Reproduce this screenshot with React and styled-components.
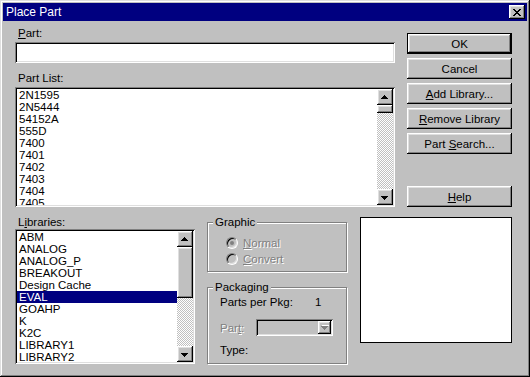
import React from 'react';
import styled, { createGlobalStyle, css } from 'styled-components';

const GlobalStyle = createGlobalStyle`
  html, body {
    margin: 0;
    padding: 0;
    background: #c0c0c0;
  }
  body {
    font-family: "Liberation Sans", Arial, sans-serif;
    font-size: 11.5px;
    color: #000;
  }
  * {
    box-sizing: border-box;
  }
`;

const raised = css`
  box-shadow: inset -1px -1px #000, inset 1px 1px #fff, inset -2px -2px #808080, inset 2px 2px #dfdfdf;
`;

const sunken = css`
  box-shadow: inset 1px 1px #808080, inset -1px -1px #fff, inset 2px 2px #000, inset -2px -2px #dfdfdf;
`;

const disabledText = css`
  color: #808080;
  text-shadow: 1px 1px 0 #fff;
`;

const Window = styled.div`
  width: 530px;
  height: 377px;
  padding: 3px;
  background: #c0c0c0;
  display: flex;
  flex-direction: column;
  box-shadow: inset -1px -1px #000, inset 1px 1px #dfdfdf, inset -2px -2px #808080, inset 2px 2px #fff;
`;

const TitleBar = styled.div`
  height: 18px;
  flex-shrink: 0;
  background: #000080;
  color: #fff;
  display: flex;
  align-items: center;
  justify-content: space-between;
  padding: 0 2px 0 3px;
  font-size: 12px;
`;

const CloseButton = styled.button`
  width: 16px;
  height: 14px;
  border: none;
  padding: 0;
  background: #c0c0c0;
  display: flex;
  align-items: center;
  justify-content: center;
  ${raised}
`;

const Body = styled.div`
  flex: 1;
  display: flex;
  flex-direction: column;
  padding: 6px 14px 0 12px;
`;

const TopSection = styled.div`
  display: grid;
  grid-template-columns: 380px 105px;
  column-gap: 12px;
`;

const Column = styled.div`
  display: flex;
  flex-direction: column;
`;

const Label = styled.label`
  display: block;
  height: 13px;
  line-height: 13px;
  padding-left: 3px;
  white-space: nowrap;
  margin-top: ${p => p.$top || 0}px;
  margin-bottom: ${p => p.$bottom || 0}px;
`;

const TextInput = styled.input`
  height: 21px;
  width: 100%;
  border: none;
  background: #fff;
  padding: 3px 4px;
  font: inherit;
  outline: none;
  ${sunken}
`;

const ButtonColumn = styled.div`
  display: flex;
  flex-direction: column;
  gap: 4px;
  padding-top: 6px;
`;

const Button = styled.button`
  height: 21px;
  width: 100%;
  border: none;
  padding: 0;
  background: #c0c0c0;
  font: inherit;
  color: #000;
  margin-top: ${p => p.$top || 0}px;
  ${p =>
    p.$default
      ? css`
          box-shadow: inset 0 0 0 1px #000, inset -2px -2px #000, inset 2px 2px #fff,
            inset -3px -3px #808080, inset 3px 3px #dfdfdf;
        `
      : raised}
`;

const ListBox = styled.div`
  height: ${p => p.$height}px;
  display: flex;
  padding: 2px;
  background: #fff;
  ${sunken}
`;

const ListItems = styled.div`
  flex: 1;
  overflow: hidden;
`;

const ListItem = styled.div`
  height: 12px;
  line-height: 12px;
  padding-left: 2px;
  white-space: nowrap;
  background: ${p => (p.$selected ? '#000080' : 'transparent')};
  color: ${p => (p.$selected ? '#fff' : '#000')};
`;

const ScrollBar = styled.div`
  width: 16px;
  flex-shrink: 0;
  display: flex;
  flex-direction: column;
`;

const ScrollButton = styled.div`
  height: 16px;
  flex-shrink: 0;
  background: #c0c0c0;
  display: flex;
  align-items: center;
  justify-content: center;
  ${raised}
`;

const Thumb = styled.div`
  height: ${p => p.$height}px;
  flex-shrink: 0;
  background: #c0c0c0;
  ${raised}
`;

const Track = styled.div`
  flex: 1;
  background: repeating-conic-gradient(#c0c0c0 0 25%, #fff 0 50%) 0 0 / 2px 2px;
`;

const BottomSection = styled.div`
  display: flex;
  align-items: flex-start;
  margin-top: 9px;
`;

const LibraryColumn = styled.div`
  width: 180px;
  display: flex;
  flex-direction: column;
`;

const GroupColumn = styled.div`
  width: 140px;
  margin-left: 12px;
  display: flex;
  flex-direction: column;
`;

const Group = styled.fieldset`
  margin: ${p => p.$top || 0}px 0 0 0;
  padding: ${p => p.$padTop}px 0 ${p => p.$padBottom}px 5px;
  min-width: 0;
  border: 1px solid #808080;
  box-shadow: 1px 1px 0 #fff, inset 1px 1px 0 #fff;
`;

const Legend = styled.legend`
  padding: 0 2px;
  line-height: 13px;
  background: #c0c0c0;
`;

const RadioRow = styled.div`
  height: 16px;
  margin-left: 13px;
  display: flex;
  align-items: center;
  gap: 5px;
  ${disabledText}
`;

const RadioCircle = styled.span`
  position: relative;
  width: 12px;
  height: 12px;
  border-radius: 50%;
  border: 1px solid;
  border-color: #808080 #fff #fff #808080;
  background: #c0c0c0;
  box-shadow: inset 1px 1px #000, inset -1px -1px #dfdfdf;
  flex-shrink: 0;

  &::after {
    content: "";
    display: ${p => (p.$checked ? 'block' : 'none')};
    position: absolute;
    left: 3px;
    top: 3px;
    width: 4px;
    height: 4px;
    border-radius: 50%;
    background: #808080;
  }
`;

const InfoRow = styled.div`
  height: ${p => p.$height}px;
  margin: ${p => p.$top || 0}px 0 0 7px;
  display: flex;
  align-items: center;
  white-space: nowrap;
`;

const InfoLabel = styled.span`
  width: ${p => p.$width}px;
  flex-shrink: 0;
  ${p => p.$disabled && disabledText}
`;

const Combo = styled.div`
  width: 77px;
  height: 17px;
  padding: 2px;
  background: #c0c0c0;
  display: flex;
  justify-content: flex-end;
  ${sunken}
`;

const ComboButton = styled.div`
  width: 13px;
  height: 13px;
  background: #c0c0c0;
  display: flex;
  align-items: center;
  justify-content: center;
  ${raised}
`;

const Preview = styled.div`
  width: 152px;
  height: 126px;
  margin: 1px 0 0 13px;
  background: #fff;
  border: 1px solid #000;
`;

const arrowPath = 'M3 0h1v1h1v1h1v1h1v1H0V3h1V2h1V1h1z';

const Arrow = ({ down, disabled }) => (
  <svg width="8" height="5" viewBox="0 0 8 5" shapeRendering="crispEdges"
    style={down ? { transform: 'scaleY(-1)' } : undefined}>
    {disabled && <path d={arrowPath} fill="#fff" transform="translate(1 1)" />}
    <path d={arrowPath} fill={disabled ? '#808080' : '#000'} />
  </svg>
);

const CloseGlyph = () => (
  <svg width="8" height="7" viewBox="0 0 8 7" shapeRendering="crispEdges">
    <path
      fill="#000"
      d="M0 0h2v1H0zM6 0h2v1H6zM1 1h2v1H1zM5 1h2v1H5zM2 2h4v1H2zM3 3h2v1H3zM2 4h4v1H2zM1 5h2v1H1zM5 5h2v1H5zM0 6h2v1H0zM6 6h2v1H6z"
    />
  </svg>
);

const ScrollTrack = ({ thumb }) => (
  <ScrollBar>
    <ScrollButton><Arrow /></ScrollButton>
    <Thumb $height={thumb} />
    <Track />
    <ScrollButton><Arrow down /></ScrollButton>
  </ScrollBar>
);

const parts = ['2N1595', '2N5444', '54152A', '555D', '7400', '7401', '7402', '7403', '7404', '7405', '7406'];
const libraries = ['ABM', 'ANALOG', 'ANALOG_P', 'BREAKOUT', 'Design Cache', 'EVAL', 'GOAHP', 'K', 'K2C', 'LIBRARY1', 'LIBRARY2'];

export default function App() {
  return (
    <>
      <GlobalStyle />
      <Window>
        <TitleBar>
          <span>Place Part</span>
          <CloseButton aria-label="Close"><CloseGlyph /></CloseButton>
        </TitleBar>
        <Body>
          <TopSection>
            <Column>
              <Label $bottom={2}><u>P</u>art:</Label>
              <TextInput defaultValue="" />
              <Label $top={9} $bottom={2}>Part List:</Label>
              <ListBox $height={120}>
                <ListItems>
                  {parts.map(p => <ListItem key={p}>{p}</ListItem>)}
                </ListItems>
                <ScrollTrack thumb={8} />
              </ListBox>
            </Column>
            <ButtonColumn>
              <Button $default>OK</Button>
              <Button>Cancel</Button>
              <Button><u>A</u>dd Library...</Button>
              <Button><u>R</u>emove Library</Button>
              <Button>Part <u>S</u>earch...</Button>
              <Button $top={28}><u>H</u>elp</Button>
            </ButtonColumn>
          </TopSection>
          <BottomSection>
            <LibraryColumn>
              <Label>L<u>i</u>braries:</Label>
              <ListBox $height={135}>
                <ListItems>
                  {libraries.map(l => (
                    <ListItem key={l} $selected={l === 'EVAL'}>{l}</ListItem>
                  ))}
                </ListItems>
                <ScrollTrack thumb={51} />
              </ListBox>
            </LibraryColumn>
            <GroupColumn>
              <Group $padTop={6} $padBottom={4}>
                <Legend>Graphic</Legend>
                <RadioRow><RadioCircle $checked /><span><u>N</u>ormal</span></RadioRow>
                <RadioRow><RadioCircle /><span><u>C</u>onvert</span></RadioRow>
              </Group>
              <Group $top={9} $padTop={1} $padBottom={7}>
                <Legend>Packaging</Legend>
                <InfoRow $height={13}>
                  <InfoLabel $width={95}>Parts per Pkg:</InfoLabel>
                  <span>1</span>
                </InfoRow>
                <InfoRow $height={17} $top={11}>
                  <InfoLabel $width={36} $disabled>Par<u>t</u>:</InfoLabel>
                  <Combo>
                    <ComboButton><Arrow down disabled /></ComboButton>
                  </Combo>
                </InfoRow>
                <InfoRow $height={13} $top={7}>
                  <InfoLabel $width={40}>Type:</InfoLabel>
                </InfoRow>
              </Group>
            </GroupColumn>
            <Preview />
          </BottomSection>
        </Body>
      </Window>
    </>
  );
}
